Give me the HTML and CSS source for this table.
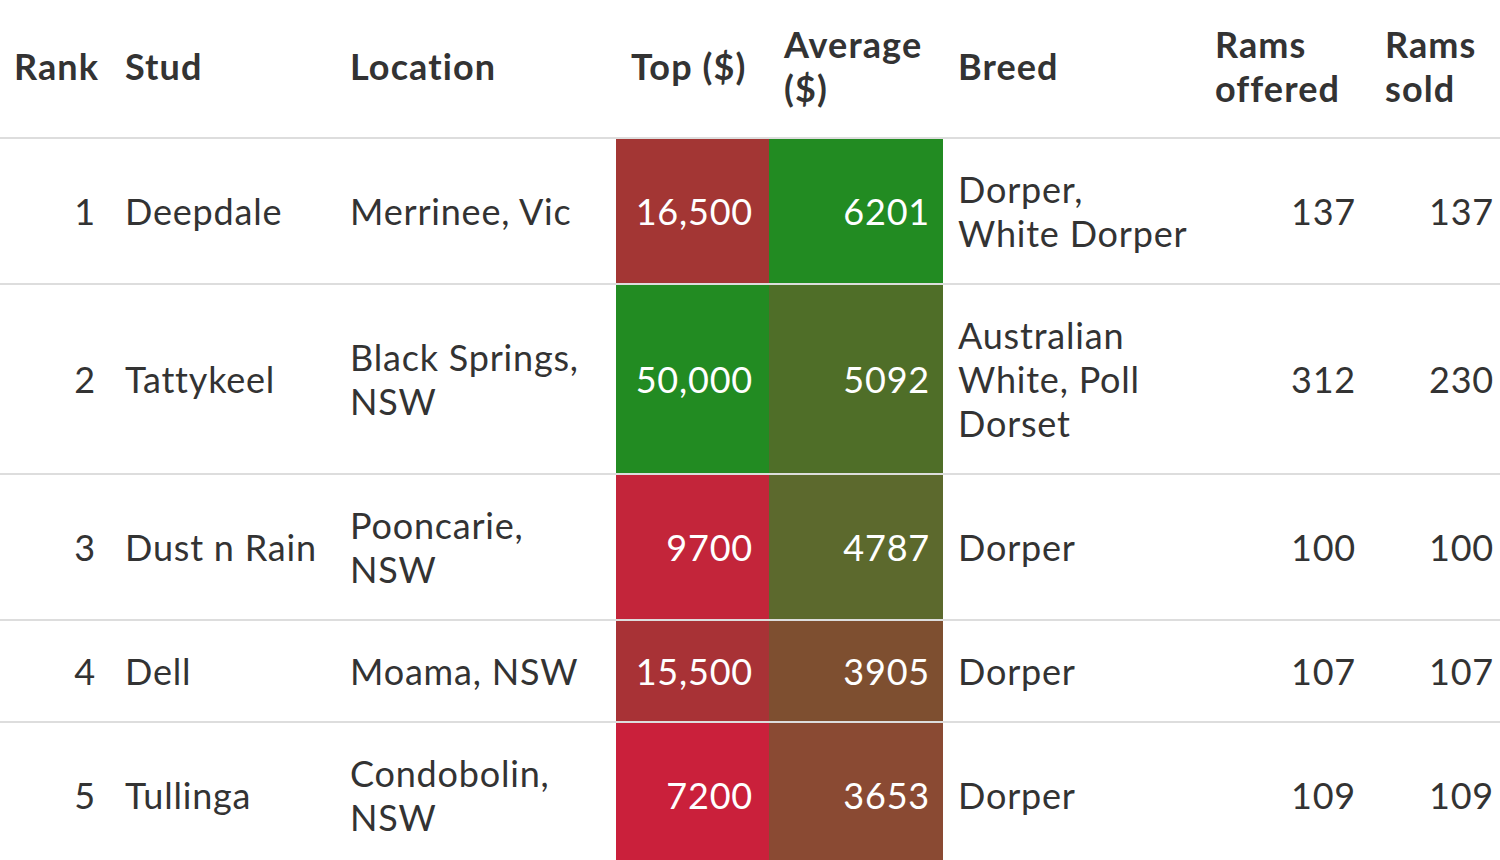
FILE: index.html
```
<!DOCTYPE html>
<html lang="en">
<head>
<meta charset="utf-8">
<title>Rams sales</title>
<link rel="stylesheet" href="styles.css">
</head>
<body>
<table class="sales">
  <colgroup>
    <col class="c-rank"><col class="c-stud"><col class="c-loc"><col class="c-top"><col class="c-avg"><col class="c-breed"><col class="c-off"><col class="c-sold">
  </colgroup>
  <thead>
    <tr>
      <th>Rank</th><th>Stud</th><th>Location</th><th>Top ($)</th><th>Average ($)</th><th>Breed</th><th>Rams offered</th><th class="last">Rams sold</th>
    </tr>
  </thead>
  <tbody>
    <tr>
      <td class="num">1</td><td>Deepdale</td><td>Merrinee, Vic</td>
      <td class="num heat top" style="background:#a33634">16,500</td>
      <td class="num heat avg" style="background:#228b22">6201</td>
      <td>Dorper, <span class="nowrap">White Dorper</span></td><td class="num">137</td><td class="num last">137</td>
    </tr>
    <tr>
      <td class="num">2</td><td>Tattykeel</td><td>Black Springs, NSW</td>
      <td class="num heat top" style="background:#228b22">50,000</td>
      <td class="num heat avg" style="background:#4f6e28">5092</td>
      <td>Australian White, Poll Dorset</td><td class="num">312</td><td class="num last">230</td>
    </tr>
    <tr>
      <td class="num">3</td><td class="nowrap">Dust n Rain</td><td>Pooncarie, NSW</td>
      <td class="num heat top" style="background:#c3253a">9700</td>
      <td class="num heat avg" style="background:#5c692d">4787</td>
      <td>Dorper</td><td class="num">100</td><td class="num last">100</td>
    </tr>
    <tr>
      <td class="num">4</td><td>Dell</td><td>Moama, NSW</td>
      <td class="num heat top" style="background:#a83236">15,500</td>
      <td class="num heat avg" style="background:#7e4f30">3905</td>
      <td>Dorper</td><td class="num">107</td><td class="num last">107</td>
    </tr>
    <tr>
      <td class="num">5</td><td>Tullinga</td><td>Condobolin, NSW</td>
      <td class="num heat top" style="background:#ca203b">7200</td>
      <td class="num heat avg" style="background:#8a4a33">3653</td>
      <td>Dorper</td><td class="num">109</td><td class="num last">109</td>
    </tr>
  </tbody>
</table>
</body>
</html>
```
FILE: styles.css
```
html, body {
  margin: 0;
  padding: 0;
  background: #ffffff;
  overflow: hidden;
}
body {
  font-family: Lato, "Liberation Sans", sans-serif;
  color: #333333;
}
.sales {
  border-collapse: collapse;
  table-layout: fixed;
  width: 1500px;
  font-size: 36px;
  line-height: 44px;
}
.c-rank { width: 110px; }
.c-stud { width: 225px; }
.c-loc { width: 281px; }
.c-top { width: 153px; }
.c-avg { width: 174px; }
.c-breed { width: 257px; }
.c-off { width: 170px; }
.c-sold { width: 130px; }

.sales th {
  text-align: left;
  font-weight: 700;
  letter-spacing: 1.1px;
  vertical-align: middle;
  padding: 22px 15px 27px 15px;
  border-bottom: 2px solid #dddddd;
}
.sales th:first-child { padding-left: 14px; }
.sales td {
  padding: 28px 15px;
  vertical-align: middle;
  border-bottom: 2px solid #dddddd;
  font-weight: 400;
  letter-spacing: 0.8px;
}
.sales td.num { text-align: right; padding-right: 14px; }
.sales td.last { padding-right: 6px; }
.sales td.heat { color: #ffffff; }
.sales td.top { padding-right: 16px; }
.sales td.avg { padding-right: 13px; }
.nowrap { white-space: nowrap; }
```
